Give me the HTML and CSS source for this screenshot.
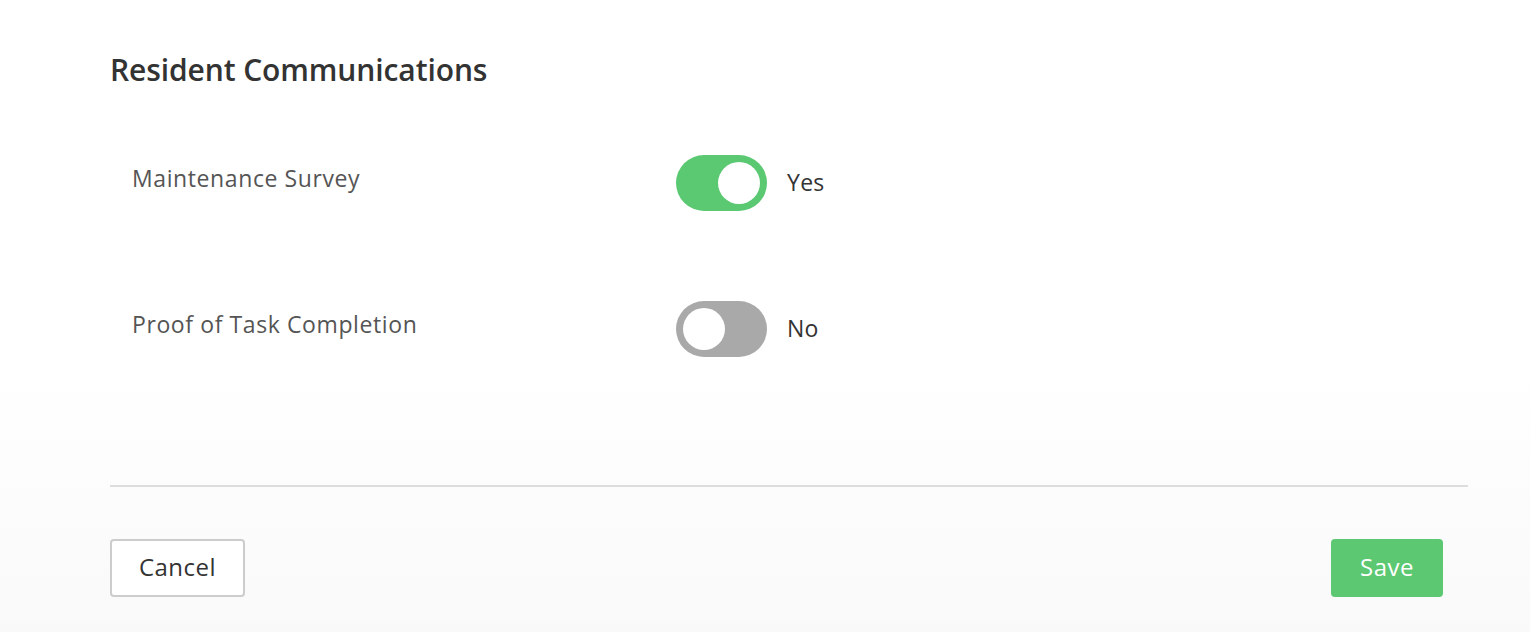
FILE: index.html
```html
<!DOCTYPE html>
<html>
<head>
<meta charset="utf-8">
<link rel="stylesheet" href="styles.css">
</head>
<body>
<div class="page">
  <h2 class="title">Resident Communications</h2>
  <div class="settings">
    <div class="row">
      <div class="label">Maintenance Survey</div>
      <div class="control">
        <span class="toggle on"><span class="knob"></span></span>
        <span class="state">Yes</span>
      </div>
    </div>
    <div class="row">
      <div class="label">Proof of Task Completion</div>
      <div class="control">
        <span class="toggle off"><span class="knob"></span></span>
        <span class="state">No</span>
      </div>
    </div>
  </div>
  <div class="divider"></div>
  <div class="actions">
    <button class="btn cancel">Cancel</button>
    <button class="btn save">Save</button>
  </div>
</div>
</body>
</html>
```

FILE: styles.css
```css
html, body {
  margin: 0;
  padding: 0;
}
body {
  width: 1530px;
  height: 632px;
  overflow: hidden;
  background: linear-gradient(to bottom, #ffffff 0px, #ffffff 360px, #f9f9f9 632px);
  font-family: "Open Sans", "Liberation Sans", sans-serif;
  color: #333;
}
.page {
  padding: 52px 62px 0 110px;
}
.title {
  margin: 0;
  font-size: 30px;
  line-height: 36px;
  font-weight: 600;
  letter-spacing: -0.1px;
  color: #333;
}
.settings {
  padding: 67px 0 0 22px;
}
.row {
  display: flex;
  align-items: flex-start;
  height: 146px;
}
.label {
  width: 544px;
  font-size: 23px;
  line-height: 28px;
  padding-top: 9px;
  letter-spacing: 0.6px;
  color: #555;
}
.control {
  display: flex;
  align-items: center;
  gap: 20px;
}
.toggle {
  width: 91px;
  height: 56px;
  border-radius: 28px;
  display: flex;
  align-items: center;
  padding: 0 7px;
  box-sizing: border-box;
}
.toggle.on {
  background: #5bc872;
  justify-content: flex-end;
}
.toggle.off {
  background: #a9a9a9;
  justify-content: flex-start;
}
.knob {
  width: 42px;
  height: 42px;
  border-radius: 50%;
  background: #fff;
}
.state {
  font-size: 23px;
  letter-spacing: 0.3px;
  color: #333;
  padding-bottom: 2px;
}
.divider {
  margin-top: 38px;
  height: 2px;
  background: #dddddd;
}
.actions {
  display: flex;
  justify-content: space-between;
  padding: 52px 25px 0 0;
}
.btn {
  height: 58px;
  border-radius: 4px;
  font-family: "Open Sans", "Liberation Sans", sans-serif;
  font-size: 24px;
  letter-spacing: 0.5px;
  padding: 0 0 3px;
  cursor: pointer;
}
.cancel {
  width: 135px;
  background: #fff;
  border: 2px solid #cccccc;
  color: #333;
}
.save {
  width: 112px;
  background: #5cc872;
  border: none;
  color: #fff;
}
```
